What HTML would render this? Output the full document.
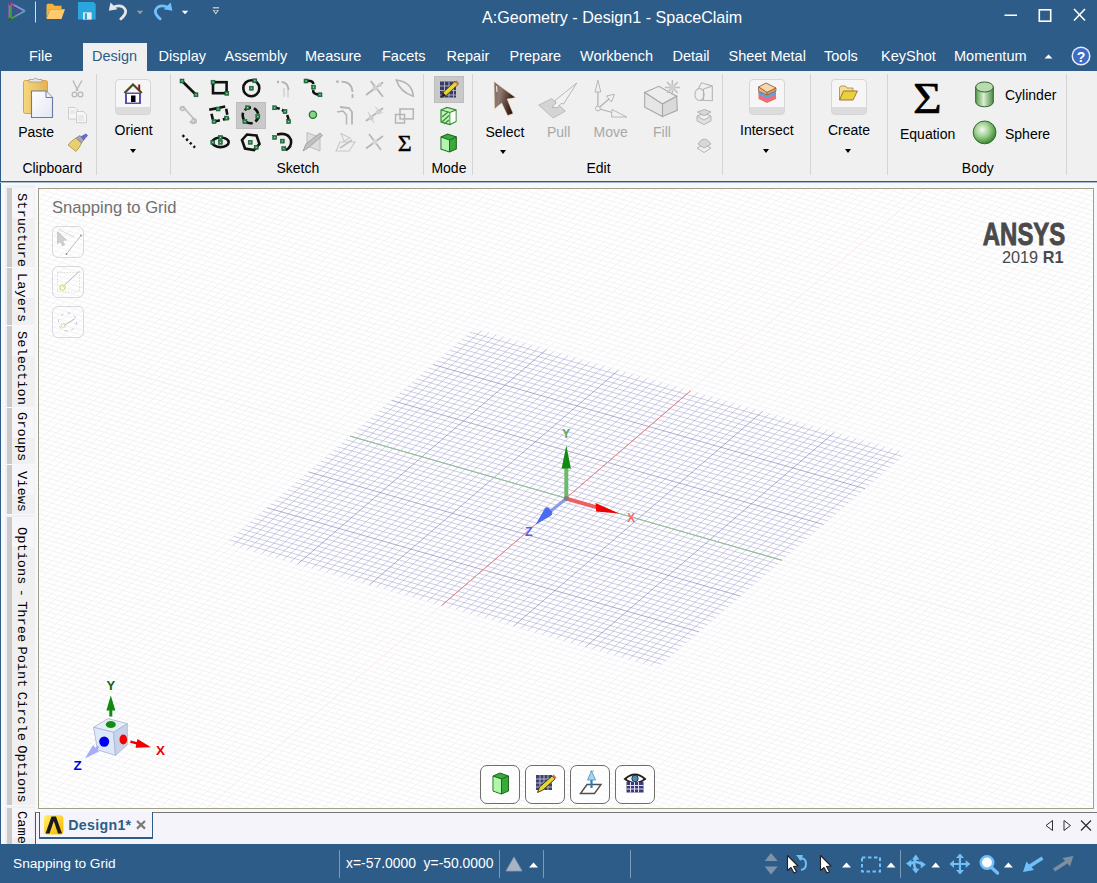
<!DOCTYPE html>
<html><head><meta charset="utf-8">
<style>
*{margin:0;padding:0;box-sizing:border-box}
html,body{width:1097px;height:883px;overflow:hidden;background:#fff;font-family:"Liberation Sans",sans-serif}
.a{position:absolute}
.t{position:absolute;white-space:nowrap;line-height:1}
#title{left:0;top:0;width:1097px;height:71px;background:#2D5C88}
.tab{position:absolute;top:48.7px;font-size:14.5px;color:#fff;white-space:nowrap;line-height:1}
#ribbon{left:0;top:71px;width:1097px;height:111px;background:#F0F0F0;border-left:1px solid #2D5C88}
.rl{position:absolute;font-size:14px;color:#000;white-space:nowrap;line-height:1}
.sep{position:absolute;top:74px;width:1px;height:101px;background:#D4D4D4}
.gl{position:absolute;top:161px;font-size:14px;color:#000;white-space:nowrap;line-height:1}
.dd{position:absolute;width:0;height:0;border-left:3.5px solid transparent;border-right:3.5px solid transparent;border-top:4px solid #000}
.side{position:absolute;left:5px;width:30px}
.vt{position:absolute;font-family:"Liberation Mono",monospace;font-size:13.7px;color:#000;white-space:nowrap;line-height:1;transform-origin:0 0;transform:rotate(90deg);word-spacing:-4.0px}
.bar{position:absolute;left:7px;width:5px;background:#C9C9C9}
#status{left:0;top:844px;width:1097px;height:39px;background:#2D5C88}
.ssep{position:absolute;top:850px;width:1px;height:28px;background:#7F9AB8}
.vbtn{position:absolute;top:765px;width:40px;height:39px;border:1px solid #6E6E6E;border-radius:7px;background:rgba(255,255,255,0.6)}
.snap{position:absolute;left:52px;width:32px;height:32px;border:1px solid #DADADA;border-radius:6px}
</style></head><body>

<!-- title bar + tab row -->
<div id="title" class="a"></div>
<div class="t" style="left:482px;top:9px;font-size:16.1px;color:#fff">A:Geometry - Design1 - SpaceClaim</div>


<svg class="a" style="left:0;top:0" width="240" height="26" viewBox="0 0 240 26">
 <!-- app logo -->
 <path d="M9.5 3 L9.5 19" stroke="#B060B0" stroke-width="2"/>
 <path d="M11 4 L11 18" stroke="#40A040" stroke-width="1.6"/>
 <path d="M10 3 L25 11" stroke="#C050A0" stroke-width="1.6"/>
 <path d="M14 5 L25 11" stroke="#60A0F0" stroke-width="1.6"/>
 <path d="M10 19 L25 11" stroke="#40B040" stroke-width="1.6"/>
 <path d="M15 16 L25 11" stroke="#6090E0" stroke-width="1.4"/>
 <path d="M12 6 L21 11 L12 17" stroke="#7A3060" stroke-width="1" fill="none" opacity="0.8"/>
 <circle cx="10" cy="19" r="1.5" fill="#0A7A0A"/>
 <circle cx="10" cy="4" r="1.3" fill="#A0208A"/>
 <!-- separator -->
 <rect x="35" y="1.5" width="1" height="21" fill="#D8DDE6"/>
 <!-- folder -->
 <path d="M46.5 18.5 L46.5 5.5 Q46.5 3.8 48 3.8 L52.5 3.8 L54.5 5.8 L61.5 5.8 L61.5 9 L50 9 Z" fill="#F4B43C"/>
 <path d="M46.5 19 L50 9.3 L65 9.3 L61.5 19 Z" fill="#FFC96E"/>
 <!-- save -->
 <path d="M78 2 L93.5 2 L95.7 4.2 L95.7 19.6 L78 19.6 Z" fill="#2AA6DF"/>
 <rect x="83" y="12.3" width="8.6" height="7.3" fill="#E8EAEC"/>
 <rect x="84.8" y="13.3" width="2.2" height="6.3" fill="#2AA6DF"/>
 <!-- undo -->
 <path d="M113 7.5 Q118.5 4.5 123 7 Q127 10 125 14 Q123.5 16.8 120.8 18.8" stroke="#E6E6E6" stroke-width="2.8" fill="none" stroke-linecap="round"/>
 <path d="M108.8 10.8 L110.5 2.5 L117.5 9.3 Z" fill="#E6E6E6"/>
 <path d="M136.7 10.8 L143.2 10.8 L140 14.2 Z" fill="#A59B8C"/>
 <!-- redo -->
 <path d="M168 7.5 Q162.5 4.5 158 7 Q154 10 156 14 Q157.5 16.8 160.2 18.8" stroke="#6EC0FF" stroke-width="2.8" fill="none" stroke-linecap="round"/>
 <path d="M172.4 10.8 L170.7 2.5 L163.7 9.3 Z" fill="#6EC0FF"/>
 <path d="M181.8 10.8 L188.3 10.8 L185 14.2 Z" fill="#fff"/>
 <!-- customize -->
 <rect x="212.8" y="7.2" width="6.2" height="1.2" fill="#D8D8D8"/>
 <path d="M212.6 10 L219 10 L215.8 14.5 Z" fill="#D8D8D8"/>
 <path d="M214 10.6 L217.6 10.6 L215.8 12.8 Z" fill="#2D5C88"/>
</svg>
<!-- window buttons -->
<svg class="a" style="left:995px;top:0" width="102" height="30" viewBox="995 0 102 30">
 <rect x="1004.5" y="14.5" width="12.5" height="1.5" fill="#fff"/>
 <rect x="1039.3" y="9.8" width="11.4" height="11.4" fill="none" stroke="#fff" stroke-width="1.6"/>
 <path d="M1074 9 L1085 20.5 M1085 9 L1074 20.5" stroke="#fff" stroke-width="1.6"/>
</svg>
<!-- collapse + help -->
<svg class="a" style="left:1040px;top:44px" width="57" height="26" viewBox="1040 44 57 26">
 <path d="M1044.5 58.5 L1048.5 54.5 L1052.5 58.5 Z" fill="#fff"/>
 <circle cx="1081" cy="56" r="9.5" fill="#E8EEF8"/>
 <circle cx="1081" cy="56" r="8" fill="#3C6CC8"/>
 <text x="1081" y="61.5" font-family="Liberation Sans" font-weight="bold" font-size="14" fill="#fff" text-anchor="middle">?</text>
</svg>

<!-- tabs -->
<div class="a" style="left:83px;top:43px;width:64px;height:28px;background:#F0F0F0"></div>
<div class="tab" style="left:29px">File</div>
<div class="tab" style="left:92px;color:#2D5C88">Design</div>
<div class="tab" style="left:158.5px">Display</div>
<div class="tab" style="left:224.5px">Assembly</div>
<div class="tab" style="left:305px">Measure</div>
<div class="tab" style="left:382px">Facets</div>
<div class="tab" style="left:446.5px">Repair</div>
<div class="tab" style="left:509.5px">Prepare</div>
<div class="tab" style="left:580px">Workbench</div>
<div class="tab" style="left:672.5px">Detail</div>
<div class="tab" style="left:728.5px">Sheet Metal</div>
<div class="tab" style="left:824px">Tools</div>
<div class="tab" style="left:881px">KeyShot</div>
<div class="tab" style="left:954px">Momentum</div>

<!-- ribbon -->
<div id="ribbon" class="a"></div>
<div class="a" style="left:0;top:181px;width:1097px;height:1px;background:#2D5C88"></div><div class="a" style="left:0;top:182px;width:1097px;height:1px;background:#A8BCD0"></div>


<!-- ribbon content -->
<div class="sep" style="left:96px"></div>
<div class="sep" style="left:170px"></div>
<div class="sep" style="left:423px"></div>
<div class="sep" style="left:472px"></div>
<div class="sep" style="left:722px"></div>
<div class="sep" style="left:810px"></div>
<div class="sep" style="left:887px"></div>
<div class="sep" style="left:1066px"></div>

<div class="rl" style="left:18.2px;top:124.5px">Paste</div>
<div class="gl" style="left:22.4px">Clipboard</div>
<div class="a" style="left:115px;top:79px;width:36px;height:36px;border:1px solid #D6D6D6;border-radius:4px;background:linear-gradient(#F6F6F6 0,#F6F6F6 78%,#DCDCDC 78%)"></div>
<div class="rl" style="left:114.6px;top:122.7px">Orient</div>
<div class="dd" style="left:129.7px;top:148.5px"></div>
<div class="gl" style="left:276.5px">Sketch</div>
<div class="gl" style="left:431.4px">Mode</div>
<div class="rl" style="left:485.5px;top:124.8px">Select</div>
<div class="dd" style="left:500.4px;top:149.5px"></div>
<div class="rl" style="left:547px;top:124.8px;color:#A8A8A8">Pull</div>
<div class="rl" style="left:593.5px;top:124.8px;color:#A8A8A8">Move</div>
<div class="rl" style="left:653px;top:124.8px;color:#A8A8A8">Fill</div>
<div class="gl" style="left:586.4px">Edit</div>
<div class="a" style="left:749px;top:79px;width:36px;height:36px;border:1px solid #D6D6D6;border-radius:4px;background:linear-gradient(#F6F6F6 0,#F6F6F6 78%,#DCDCDC 78%)"></div>
<div class="rl" style="left:740px;top:122.7px">Intersect</div>
<div class="dd" style="left:763.3px;top:148.5px"></div>
<div class="a" style="left:831px;top:79px;width:36px;height:36px;border:1px solid #D6D6D6;border-radius:4px;background:linear-gradient(#F6F6F6 0,#F6F6F6 78%,#DCDCDC 78%)"></div>
<div class="rl" style="left:828px;top:122.7px">Create</div>
<div class="dd" style="left:845.3px;top:148.5px"></div>
<div class="rl" style="left:900px;top:126.7px">Equation</div>
<div class="rl" style="left:1005px;top:88px">Cylinder</div>
<div class="rl" style="left:1005px;top:126.5px">Sphere</div>
<div class="gl" style="left:961.8px">Body</div>
<div class="a" style="left:236px;top:102px;width:30px;height:27px;background:#C9C9C9;border:1px solid #BDBDBD"></div>
<div class="a" style="left:434px;top:76px;width:30px;height:27px;background:#C9C9C9;border:1px solid #BDBDBD"></div>

<svg class="a" style="left:0;top:71px" width="1097" height="111" viewBox="0 71 1097 111">
<defs>
 <linearGradient id="clipg" x1="0" y1="0" x2="1" y2="0"><stop offset="0" stop-color="#F7D77E"/><stop offset="1" stop-color="#E5B24E"/></linearGradient>
 <linearGradient id="pageg" x1="0" y1="0" x2="1" y2="1"><stop offset="0" stop-color="#FFFFFF"/><stop offset="1" stop-color="#E4E6F2"/></linearGradient>
 <linearGradient id="selg" x1="0" y1="0" x2="1" y2="0.3"><stop offset="0" stop-color="#7A6A60"/><stop offset="0.35" stop-color="#907A70"/><stop offset="1" stop-color="#2A1208"/></linearGradient>
 <radialGradient id="sphg" cx="0.4" cy="0.38" r="0.62"><stop offset="0" stop-color="#F4FBF2"/><stop offset="0.5" stop-color="#9FD08F"/><stop offset="1" stop-color="#3F8A37"/></radialGradient>
 <linearGradient id="cylg" x1="0" y1="0" x2="1" y2="0"><stop offset="0" stop-color="#5A9A4E"/><stop offset="0.45" stop-color="#D8F0D0"/><stop offset="1" stop-color="#4E8A44"/></linearGradient>
</defs>
<rect x="23.5" y="80.5" width="24" height="33" rx="2" fill="url(#clipg)" stroke="#D9A048" stroke-width="1"/>
<path d="M29 82 L29 79.5 L33 79.5 Q35.5 76.5 38 79.5 L42 79.5 L42 82 Z" fill="#E6E6E6" stroke="#9A9A9A" stroke-width="0.8"/>
<path d="M31.5 91 L46 91 L52.5 97.5 L52.5 117.5 L31.5 117.5 Z" fill="url(#pageg)" stroke="#6A7AA8" stroke-width="1.1"/>
<path d="M46 91 L46 97.5 L52.5 97.5" fill="#EEF" stroke="#6A7AA8" stroke-width="1"/>
<!-- cut -->
<path d="M73 80.5 L78 91 M82 80.5 L76 91" stroke="#B8B8B8" stroke-width="1.4"/>
<circle cx="74.5" cy="94.5" r="2.4" fill="none" stroke="#B8B8B8" stroke-width="1.3"/>
<circle cx="80.5" cy="94.5" r="2.4" fill="none" stroke="#B8B8B8" stroke-width="1.3"/>
<!-- copy -->
<path d="M68.5 107.5 L75 107.5 L77.5 110 L77.5 119 L68.5 119 Z" fill="#F6F6F6" stroke="#C8C8C8" stroke-width="0.9"/>
<path d="M76.5 111.5 L83.5 111.5 L86.5 114.5 L86.5 122.7 L76.5 122.7 Z" fill="#F6F6F6" stroke="#C8C8C8" stroke-width="0.9"/>
<path d="M70 111 h5 M70 113 h5 M78 116 h6 M78 118 h6 M78 120 h6" stroke="#D0D0D0" stroke-width="0.7"/>
<!-- brush -->
<path d="M68 145 Q72 140 76 138 L81.5 143 Q79.5 148 76 151.5 Z" fill="#E8D070" stroke="#A89040" stroke-width="0.8"/>
<path d="M76 138 L80 135.5 L84 139.5 L81.5 143 Z" fill="#A8A8B0" stroke="#707078" stroke-width="0.6"/>
<path d="M80.5 136.5 L86 133.5 L88 135.5 L83.5 140.5 Z" fill="#6A68C8"/>
<!-- Orient house -->
<path d="M125 104 L125 92.5 L141 92.5 L141 104 Z" fill="#5A50A8"/>
<path d="M127 102.5 L127 94 L139 94 L139 102.5 Z" fill="#fff"/>
<rect x="131" y="95.5" width="4.5" height="6.5" fill="#000"/>
<path d="M124.5 93 L133 84.5 L141.8 93" fill="none" stroke="#4A4A1A" stroke-width="2.2"/>
<rect x="138.2" y="84.5" width="2" height="5.5" fill="#8A1A1A"/>
<path d="M182 81 L196 94.8" stroke="#111" stroke-width="2.6"/><rect x="180" y="79" width="4" height="4" fill="#227A44" stroke="#0E4E26" stroke-width="0.5"/><rect x="181.4" y="80.4" width="1.2" height="1.2" fill="#B8E0C4"/><rect x="194" y="92.8" width="4" height="4" fill="#227A44" stroke="#0E4E26" stroke-width="0.5"/><rect x="195.4" y="94.2" width="1.2" height="1.2" fill="#B8E0C4"/><rect x="213" y="82.2" width="13.6" height="11" fill="none" stroke="#111" stroke-width="2.6"/><rect x="211" y="80.2" width="4" height="4" fill="#227A44" stroke="#0E4E26" stroke-width="0.5"/><rect x="212.4" y="81.60000000000001" width="1.2" height="1.2" fill="#B8E0C4"/><rect x="224.8" y="91.3" width="4" height="4" fill="#227A44" stroke="#0E4E26" stroke-width="0.5"/><rect x="226.20000000000002" y="92.7" width="1.2" height="1.2" fill="#B8E0C4"/><circle cx="251.3" cy="88.2" r="8" fill="none" stroke="#111" stroke-width="2.6"/><rect x="249.3" y="86.2" width="4" height="4" fill="#227A44" stroke="#0E4E26" stroke-width="0.5"/><rect x="250.70000000000002" y="87.60000000000001" width="1.2" height="1.2" fill="#B8E0C4"/><rect x="252.8" y="78.8" width="4" height="4" fill="#227A44" stroke="#0E4E26" stroke-width="0.5"/><rect x="254.20000000000002" y="80.2" width="1.2" height="1.2" fill="#B8E0C4"/><path d="M277 82 L279 82" stroke="#B4B4B4" stroke-width="2.5"/><path d="M281.5 82 Q288 82.5 288.5 90" fill="none" stroke="#B4B4B4" stroke-width="2"/><path d="M284 88 L284 97 M288 90 L288 97.5" stroke="#C8C8C8" stroke-width="1.2"/><path d="M306 81 Q313 80 313.5 84 M313.5 90 Q312 94 320 94.8" fill="none" stroke="#111" stroke-width="2.6"/><rect x="304" y="79" width="4" height="4" fill="#227A44" stroke="#0E4E26" stroke-width="0.5"/><rect x="305.4" y="80.4" width="1.2" height="1.2" fill="#B8E0C4"/><rect x="311.5" y="85.1" width="4" height="4" fill="#227A44" stroke="#0E4E26" stroke-width="0.5"/><rect x="312.9" y="86.5" width="1.2" height="1.2" fill="#B8E0C4"/><rect x="318" y="92.8" width="4" height="4" fill="#227A44" stroke="#0E4E26" stroke-width="0.5"/><rect x="319.4" y="94.2" width="1.2" height="1.2" fill="#B8E0C4"/><path d="M336 81.6 L339 81.6" stroke="#B4B4B4" stroke-width="2"/><path d="M341.5 81.6 Q352 82 352.5 92" fill="none" stroke="#B4B4B4" stroke-width="1.8"/><path d="M352.5 94 L352.5 98" stroke="#B4B4B4" stroke-width="1.8"/><path d="M366 95 L383 82.2 M370.7 81 L383 96.8" stroke="#B4B4B4" stroke-width="1.8"/><circle cx="375" cy="88" r="2.5" fill="#D0D0D0"/><circle cx="380" cy="85" r="2" fill="#D0D0D0"/><path d="M396.3 80 Q412 82 413.3 96.2 Q400 92 396.3 80 Z" fill="none" stroke="#B4B4B4" stroke-width="1.6"/><path d="M180 109 Q181 106 184 108 L193 118 Q196 121 194 123 Q191 124 190 121" fill="none" stroke="#BDBDBD" stroke-width="1.8"/><circle cx="182.5" cy="108.5" r="2" fill="none" stroke="#BDBDBD" stroke-width="1.5"/><circle cx="194" cy="121" r="2.2" fill="none" stroke="#BDBDBD" stroke-width="1.5"/><path d="M210.5 109.6 L225.7 106.4 L228 118.3 L213.4 121.8 Z" fill="none" stroke="#111" stroke-width="2.6" stroke-dasharray="6 3"/><rect x="216.1" y="107" width="4" height="4" fill="#227A44" stroke="#0E4E26" stroke-width="0.5"/><rect x="217.5" y="108.4" width="1.2" height="1.2" fill="#B8E0C4"/><rect x="224.6" y="116.1" width="4" height="4" fill="#227A44" stroke="#0E4E26" stroke-width="0.5"/><rect x="226.0" y="117.5" width="1.2" height="1.2" fill="#B8E0C4"/><rect x="212" y="119.6" width="4" height="4" fill="#227A44" stroke="#0E4E26" stroke-width="0.5"/><rect x="213.4" y="121.0" width="1.2" height="1.2" fill="#B8E0C4"/><circle cx="250.5" cy="115.4" r="7.8" fill="none" stroke="#111" stroke-width="2.6" stroke-dasharray="7 3"/><rect x="245.6" y="105.8" width="4" height="4" fill="#227A44" stroke="#0E4E26" stroke-width="0.5"/><rect x="247.0" y="107.2" width="1.2" height="1.2" fill="#B8E0C4"/><rect x="255.8" y="114.6" width="4" height="4" fill="#227A44" stroke="#0E4E26" stroke-width="0.5"/><rect x="257.2" y="116.0" width="1.2" height="1.2" fill="#B8E0C4"/><rect x="242.9" y="119.6" width="4" height="4" fill="#227A44" stroke="#0E4E26" stroke-width="0.5"/><rect x="244.3" y="121.0" width="1.2" height="1.2" fill="#B8E0C4"/><path d="M274.7 107.8 Q288 109 288.7 121.6" fill="none" stroke="#111" stroke-width="2.6" stroke-dasharray="5 2.5"/><rect x="272.7" y="105.8" width="4" height="4" fill="#227A44" stroke="#0E4E26" stroke-width="0.5"/><rect x="274.09999999999997" y="107.2" width="1.2" height="1.2" fill="#B8E0C4"/><rect x="283" y="109.6" width="4" height="4" fill="#227A44" stroke="#0E4E26" stroke-width="0.5"/><rect x="284.4" y="111.0" width="1.2" height="1.2" fill="#B8E0C4"/><rect x="286.7" y="119.6" width="4" height="4" fill="#227A44" stroke="#0E4E26" stroke-width="0.5"/><rect x="288.09999999999997" y="121.0" width="1.2" height="1.2" fill="#B8E0C4"/><circle cx="312.9" cy="114.8" r="3.6" fill="#8FD08A" stroke="#1E7A2E" stroke-width="1.3"/><path d="M337 112 L343 111 L346.5 115 L346.5 124.5" fill="none" stroke="#B4B4B4" stroke-width="1.5"/><path d="M340 107 L349 108 L352 112 L352 124.5" fill="none" stroke="#B4B4B4" stroke-width="1.8"/><path d="M366 121 L383 108" stroke="#B4B4B4" stroke-width="1.6"/><circle cx="371" cy="118" r="2.5" fill="#D0D0D0"/><circle cx="378.5" cy="112" r="2.5" fill="#D0D0D0"/><path d="M368 112 L374 123 M375 107 L383 113" stroke="#C8C8C8" stroke-width="1"/><rect x="395.5" y="114.5" width="9" height="8.5" fill="none" stroke="#B4B4B4" stroke-width="1.5"/><rect x="400" y="109" width="13.3" height="9.9" fill="none" stroke="#B4B4B4" stroke-width="1.5"/><path d="M182.5 135.2 L195 147.6" stroke="#111" stroke-width="2.4" stroke-dasharray="2.4 2.8" stroke-linecap="butt"/><ellipse cx="220.5" cy="142.3" rx="8.2" ry="4.8" fill="none" stroke="#111" stroke-width="2.6"/><rect x="218.4" y="135.5" width="4" height="4" fill="#227A44" stroke="#0E4E26" stroke-width="0.5"/><rect x="219.8" y="136.9" width="1.2" height="1.2" fill="#B8E0C4"/><rect x="210.8" y="140.3" width="4" height="4" fill="#227A44" stroke="#0E4E26" stroke-width="0.5"/><rect x="212.20000000000002" y="141.70000000000002" width="1.2" height="1.2" fill="#B8E0C4"/><rect x="218.4" y="140.3" width="4" height="4" fill="#227A44" stroke="#0E4E26" stroke-width="0.5"/><rect x="219.8" y="141.70000000000002" width="1.2" height="1.2" fill="#B8E0C4"/><path d="M247 134.5 L256.5 135.5 L259.5 144 L254 150 L245 148.5 L242 140 Z" fill="none" stroke="#111" stroke-width="2.6"/><rect x="248.2" y="140.3" width="4" height="4" fill="#227A44" stroke="#0E4E26" stroke-width="0.5"/><rect x="249.6" y="141.70000000000002" width="1.2" height="1.2" fill="#B8E0C4"/><rect x="254.2" y="145.3" width="4" height="4" fill="#227A44" stroke="#0E4E26" stroke-width="0.5"/><rect x="255.6" y="146.70000000000002" width="1.2" height="1.2" fill="#B8E0C4"/><path d="M277 134.5 Q288 132 291 140 Q292 147 286 150" fill="none" stroke="#111" stroke-width="2.6"/><rect x="272.7" y="135.4" width="4" height="4" fill="#227A44" stroke="#0E4E26" stroke-width="0.5"/><rect x="274.09999999999997" y="136.8" width="1.2" height="1.2" fill="#B8E0C4"/><rect x="280.3" y="139.1" width="4" height="4" fill="#227A44" stroke="#0E4E26" stroke-width="0.5"/><rect x="281.7" y="140.5" width="1.2" height="1.2" fill="#B8E0C4"/><rect x="281.8" y="146.7" width="4" height="4" fill="#227A44" stroke="#0E4E26" stroke-width="0.5"/><rect x="283.2" y="148.1" width="1.2" height="1.2" fill="#B8E0C4"/><path d="M307 132.5 L320 137.5 L320 151 L307 146 Z" fill="#DDDDDD" stroke="#BDBDBD" stroke-width="1"/><path d="M303 151 L306 144 L320 133 L322.5 135.5 L308 148 Z" fill="#C0C0C0" stroke="#999" stroke-width="0.8"/><path d="M341 133.5 L350 138 L344 141 Z M336 151 L340 142 L355 142 L349 151 Z" fill="none" stroke="#C8C8C8" stroke-width="1.1"/><path d="M340 148 L352 140" stroke="#C0C0C0" stroke-width="1.6"/><path d="M366 148.5 L383 136 M369 134 L381 150" stroke="#B4B4B4" stroke-width="1.6"/><circle cx="375" cy="142" r="2.5" fill="#D6D6D6"/><text x="404.8" y="150.5" font-family="Liberation Serif" font-size="24" stroke="#000" stroke-width="0.4" text-anchor="middle" fill="#000">&#931;</text>
<rect x="440" y="81.5" width="16" height="16" fill="#3A3A6A"/>
<path d="M440 86 h16 M440 90.5 h16 M440 95 h16 M444.5 81.5 v16 M449 81.5 v16 M453.5 81.5 v16" stroke="#B8B8C8" stroke-width="0.9"/>
<path d="M441 97.5 L443 92.5 L455 81.5 L458 84.5 L446 95.5 Z" fill="#E6D830" stroke="#403820" stroke-width="0.8"/>
<path d="M455 81.5 L458 84.5 L459 83 L456.5 80.5 Z" fill="#E06060"/>
<path d="M441 97.5 L443 92.5 L446 95.5 Z" fill="#222"/>
<path d="M441 110 L447 107.5 L456 110 L456 121.5 L450 124.5 L441 122 Z" fill="#C8F0C0" stroke="#2E8A2E" stroke-width="1.2"/>
<path d="M441 110 L450 112.5 L456 110 M450 112.5 L450 124.5" fill="none" stroke="#2E8A2E" stroke-width="1.1"/>
<path d="M442 117 L448 112 M442 122 L449 115.5 M444 124 L449 120" stroke="#3A9A3A" stroke-width="1.6"/>
<path d="M450.5 113 L455.5 111 L455.5 121 L450.5 123.5 Z" fill="#fff"/>
<path d="M441 137 L447.5 134 L456.3 137 L456.3 149 L449.5 152 L441 149 Z" fill="#3EA83E" stroke="#1E6A1E" stroke-width="1.1"/>
<path d="M441.5 137.5 L449.5 140 L449.5 151.5 L441.5 148.8 Z" fill="#B2F5AE"/>
<path d="M441 137 L449.5 140 L456.3 137 M449.5 140 V152" fill="none" stroke="#1E6A1E" stroke-width="1"/>

<path d="M494 81.5 L515.6 97.6 L507.1 99.1 L513.1 113.6 L507.6 115.6 L501.6 103.1 L494.5 109.1 Z" fill="url(#selg)" stroke="#F0D8C0" stroke-width="0.6"/>
<path d="M496.5 86 L497 92" stroke="#fff" stroke-width="1.2" opacity="0.8"/>
<path d="M538.7 105.1 L551.7 98.6 L565.3 111.1 L553.2 118.1 Z" fill="#D4D4D4" stroke="#B8B8B8" stroke-width="0.9"/>
<path d="M552 107 L556 103 L555 100.5 L576.8 83 L563.5 104 L561 103.5 L557 108 Z" fill="#F2F2F2" stroke="#B0B0B0" stroke-width="0.9"/>
<path d="M597.9 108.5 V90" stroke="#B0B0B0" stroke-width="1.2"/><path d="M595 92 L597.9 80.2 L600.8 92 Z" fill="#F0F0F0" stroke="#B0B0B0" stroke-width="0.9"/>
<path d="M598 108.5 L609 99" stroke="#B0B0B0" stroke-width="1.2"/><path d="M606.5 96 L614.5 94.3 L611.5 102 Z" fill="#F0F0F0" stroke="#B0B0B0" stroke-width="0.9"/>
<path d="M598 108.5 L614 113" stroke="#B0B0B0" stroke-width="1.2"/><path d="M612 109.5 L626.8 117 L611.5 117 Z" fill="#F0F0F0" stroke="#B0B0B0" stroke-width="0.9"/>
<circle cx="597.9" cy="108.5" r="2.4" fill="#F0F0F0" stroke="#B0B0B0" stroke-width="0.9"/>
<path d="M644.7 92.5 L658.8 86.3 L676.7 96.2 L662.5 104.1 Z" fill="#EDEDED" stroke="#A8A8A8" stroke-width="1.1"/>
<path d="M644.7 92.5 L662.5 104.1 L662.5 116.5 L644.7 107.2 Z" fill="#E6E6E6" stroke="#A8A8A8" stroke-width="1.1"/>
<path d="M662.5 104.1 L676.7 96.2 L677.3 110.3 L662.5 116.5 Z" fill="#DADADA" stroke="#A8A8A8" stroke-width="1.1"/>
<path d="M672.4 80 V95 M664.9 87.5 H679.9 M667 82 L677.8 93 M677.8 82 L667 93" stroke="#BDBDBD" stroke-width="1.5"/>
<circle cx="672.4" cy="87.5" r="3" fill="#D0D0D0"/>
<ellipse cx="699.5" cy="94.5" rx="4.6" ry="6" fill="none" stroke="#B4B4B4" stroke-width="1.1"/>
<path d="M698.5 88.5 L701.5 82.8 L712.3 86 L712.3 100.8 L700 100.3 M703.5 89 L712.3 86 M703.5 89 L703.5 100.5" fill="none" stroke="#B4B4B4" stroke-width="1.1"/>
<path d="M697 116 L704 113 L711 116 L704 120 Z M697 116 V121 L704 124.5 L711 121 V116" fill="#E0E0E0" stroke="#B4B4B4" stroke-width="1"/>
<path d="M697.5 112 L704.5 109.5 L711 112 L704 115.5 Z" fill="#D8D8D8" stroke="#B4B4B4" stroke-width="1"/>
<path d="M697 148 L704 144.5 L711 148 L704 152.5 Z" fill="none" stroke="#B4B4B4" stroke-width="1"/>
<path d="M698 144 Q704 134 711 144 L704 148 Z" fill="#D8D8D8" stroke="#B4B4B4" stroke-width="1"/>

<path d="M758.5 87 L766 83 L776 88 L776 99 L767 103 L758.5 99 Z" fill="#E87078"/>
<path d="M758.5 91.5 L767 95.5 L776 91.5 L776 94 L767 98 L758.5 94 Z" fill="#50A8E8"/>
<path d="M758.5 87 L766 83 L776 88 L767 92.5 Z" fill="#F6D8B0" stroke="#8A5A30" stroke-width="0.8"/>
<path d="M758.5 87 L767 92.5 L767 95 L758.5 91 Z" fill="#E8B888" stroke="#8A5A30" stroke-width="0.7"/>
<path d="M767 92.5 L776 88 L776 91 L767 95 Z" fill="#D8A070" stroke="#8A5A30" stroke-width="0.7"/>
<path d="M839.5 99.5 V88 Q839.5 86 841.5 86 L845.5 86 L847 88 L853 88 L853 91 Z" fill="#F0E090" stroke="#B08040" stroke-width="0.8"/>
<path d="M839.5 100 L843.5 91 L857.4 91 L853 100 Z" fill="#E8D040" stroke="#A06820" stroke-width="0.9"/>
<text x="927.3" y="113" font-family="Liberation Serif" font-size="44" text-anchor="middle" fill="#000" stroke="#000" stroke-width="0.5" transform="translate(927.3 0) scale(1.12 1) translate(-927.3 0)">&#931;</text>
<path d="M975.7 87 V102 A8.8 4.8 0 0 0 993.3 102 V87" fill="url(#cylg)" stroke="#2F5F2F" stroke-width="1"/>
<ellipse cx="984.5" cy="87" rx="8.8" ry="5" fill="#B8DCB0" stroke="#2F5F2F" stroke-width="1"/>
<circle cx="984.6" cy="132.4" r="11.4" fill="url(#sphg)" stroke="#2F6A2F" stroke-width="1"/>
</svg>
<!-- content strip -->
<div class="a" style="left:0;top:183px;width:1097px;height:661px;background:#F7F8FC;border-left:1px solid #2D5C88"></div>

<!-- side panel -->
<div class="a" style="left:5px;top:185px;width:30px;height:659px;background:#F0F0F0"></div>


<!-- side tabs -->
<div class="a" style="left:12px;top:188px;width:22px;height:30px;background:#F6F6FA"></div><div class="a" style="left:12px;top:268px;width:22px;height:30px;background:#F6F6FA"></div><div class="a" style="left:12px;top:326px;width:22px;height:30px;background:#F6F6FA"></div><div class="a" style="left:12px;top:408px;width:22px;height:30px;background:#F6F6FA"></div><div class="a" style="left:12px;top:465px;width:22px;height:30px;background:#F6F6FA"></div><div class="a" style="left:12px;top:517px;width:22px;height:30px;background:#F6F6FA"></div><div class="a" style="left:12px;top:808px;width:22px;height:30px;background:#F6F6FA"></div><div class="a" style="left:5px;top:267px;width:30px;height:1px;background:#F8F8FC"></div><div class="a" style="left:5px;top:325px;width:30px;height:1px;background:#F8F8FC"></div><div class="a" style="left:5px;top:407px;width:30px;height:1px;background:#F8F8FC"></div><div class="a" style="left:5px;top:464px;width:30px;height:1px;background:#F8F8FC"></div><div class="a" style="left:5px;top:514px;width:30px;height:1px;background:#F8F8FC"></div><div class="a" style="left:5px;top:805px;width:30px;height:1px;background:#F8F8FC"></div>
<div class="bar" style="top:188px;height:79px"></div>
<div class="bar" style="top:268px;height:57px"></div>
<div class="bar" style="top:326px;height:81px"></div>
<div class="bar" style="top:408px;height:56px"></div>
<div class="bar" style="top:465px;height:49px"></div>
<div class="bar" style="top:517px;height:288px"></div>
<div class="bar" style="top:808px;height:36px"></div>
<div class="vt" style="left:28px;top:192.5px">Structure</div>
<div class="vt" style="left:28px;top:273px">Layers</div>
<div class="vt" style="left:28px;top:330.5px">Selection</div>
<div class="vt" style="left:28px;top:411.5px">Groups</div>
<div class="vt" style="left:28px;top:471px">Views</div>
<div class="vt" style="left:28px;top:526.5px">Options - Three Point Circle Options</div>
<div class="vt" style="left:28px;top:810.5px">Camera</div>

<!-- viewport -->
<div class="a" style="left:38px;top:188px;width:1056px;height:621px;background:#fff;border:1px solid #A29E88;overflow:hidden" id="vp"><svg class="a" style="left:0;top:0" width="1056" height="620" viewBox="0 0 1056 620">
<path d="M-82.60 -324.28L1933.40 255.32M-86.75 -320.70L1929.25 258.90M-90.90 -317.12L1925.10 262.48M-95.05 -313.54L1920.95 266.06M-99.20 -309.96L1916.80 269.64M445.60 -382.44L-716.40 619.96M-103.35 -306.38L1912.65 273.22M452.80 -380.37L-709.20 622.03M-107.50 -302.80L1908.50 276.80M460.00 -378.30L-702.00 624.10M-111.65 -299.22L1904.35 280.38M467.20 -376.23L-694.80 626.17M-115.80 -295.64L1900.20 283.96M474.40 -374.16L-687.60 628.24M-119.95 -292.06L1896.05 287.54M481.60 -372.09L-680.40 630.31M-124.10 -288.48L1891.90 291.12M488.80 -370.02L-673.20 632.38M-128.25 -284.90L1887.75 294.70M496.00 -367.95L-666.00 634.45M-132.40 -281.32L1883.60 298.28M503.20 -365.88L-658.80 636.52M-136.55 -277.74L1879.45 301.86M510.40 -363.81L-651.60 638.59M-140.70 -274.16L1875.30 305.44M517.60 -361.74L-644.40 640.66M-144.85 -270.58L1871.15 309.02M524.80 -359.67L-637.20 642.73M-149.00 -267.00L1867.00 312.60M532.00 -357.60L-630.00 644.80M-153.15 -263.42L1862.85 316.18M539.20 -355.53L-622.80 646.87M-157.30 -259.84L1858.70 319.76M546.40 -353.46L-615.60 648.94M-161.45 -256.26L1854.55 323.34M553.60 -351.39L-608.40 651.01M-165.60 -252.68L1850.40 326.92M560.80 -349.32L-601.20 653.08M-169.75 -249.10L1846.25 330.50M568.00 -347.25L-594.00 655.15M-173.90 -245.52L1842.10 334.08M575.20 -345.18L-586.80 657.22M-178.05 -241.94L1837.95 337.66M582.40 -343.11L-579.60 659.29M-182.20 -238.36L1833.80 341.24M589.60 -341.04L-572.40 661.36M-186.35 -234.78L1829.65 344.82M596.80 -338.97L-565.20 663.43M-190.50 -231.20L1825.50 348.40M604.00 -336.90L-558.00 665.50M-194.65 -227.62L1821.35 351.98M611.20 -334.83L-550.80 667.57M-198.80 -224.04L1817.20 355.56M618.40 -332.76L-543.60 669.64M-202.95 -220.46L1813.05 359.14M625.60 -330.69L-536.40 671.71M-207.10 -216.88L1808.90 362.72M632.80 -328.62L-529.20 673.78M-211.25 -213.30L1804.75 366.30M640.00 -326.55L-522.00 675.85M-215.40 -209.72L1800.60 369.88M647.20 -324.48L-514.80 677.92M-219.55 -206.14L1796.45 373.46M654.40 -322.41L-507.60 679.99M-223.70 -202.56L1792.30 377.04M661.60 -320.34L-500.40 682.06M-227.85 -198.98L1788.15 380.62M668.80 -318.27L-493.20 684.13M-232.00 -195.40L1784.00 384.20M676.00 -316.20L-486.00 686.20M-236.15 -191.82L1779.85 387.78M683.20 -314.13L-478.80 688.27M-240.30 -188.24L1775.70 391.36M690.40 -312.06L-471.60 690.34M-244.45 -184.66L1771.55 394.94M697.60 -309.99L-464.40 692.41M-248.60 -181.08L1767.40 398.52M704.80 -307.92L-457.20 694.48M-252.75 -177.50L1763.25 402.10M712.00 -305.85L-450.00 696.55M-256.90 -173.92L1759.10 405.68M719.20 -303.78L-442.80 698.62M-261.05 -170.34L1754.95 409.26M726.40 -301.71L-435.60 700.69M-265.20 -166.76L1750.80 412.84M733.60 -299.64L-428.40 702.76M-269.35 -163.18L1746.65 416.42M740.80 -297.57L-421.20 704.83M-273.50 -159.60L1742.50 420.00M748.00 -295.50L-414.00 706.90M-277.65 -156.02L1738.35 423.58M755.20 -293.43L-406.80 708.97M-281.80 -152.44L1734.20 427.16M762.40 -291.36L-399.60 711.04M-285.95 -148.86L1730.05 430.74M769.60 -289.29L-392.40 713.11M-290.10 -145.28L1725.90 434.32M776.80 -287.22L-385.20 715.18M-294.25 -141.70L1721.75 437.90M784.00 -285.15L-378.00 717.25M-298.40 -138.12L1717.60 441.48M791.20 -283.08L-370.80 719.32M-302.55 -134.54L1713.45 445.06M798.40 -281.01L-363.60 721.39M-306.70 -130.96L1709.30 448.64M805.60 -278.94L-356.40 723.46M-310.85 -127.38L1705.15 452.22M812.80 -276.87L-349.20 725.53M-315.00 -123.80L1701.00 455.80M820.00 -274.80L-342.00 727.60M-319.15 -120.22L1696.85 459.38M827.20 -272.73L-334.80 729.67M-323.30 -116.64L1692.70 462.96M834.40 -270.66L-327.60 731.74M-327.45 -113.06L1688.55 466.54M841.60 -268.59L-320.40 733.81M-331.60 -109.48L1684.40 470.12M848.80 -266.52L-313.20 735.88M-335.75 -105.90L1680.25 473.70M856.00 -264.45L-306.00 737.95M-339.90 -102.32L1676.10 477.28M863.20 -262.38L-298.80 740.02M-344.05 -98.74L1671.95 480.86M870.40 -260.31L-291.60 742.09M-348.20 -95.16L1667.80 484.44M877.60 -258.24L-284.40 744.16M-352.35 -91.58L1663.65 488.02M884.80 -256.17L-277.20 746.23M-356.50 -88.00L1659.50 491.60M892.00 -254.10L-270.00 748.30M-360.65 -84.42L1655.35 495.18M899.20 -252.03L-262.80 750.37M-364.80 -80.84L1651.20 498.76M906.40 -249.96L-255.60 752.44M-368.95 -77.26L1647.05 502.34M913.60 -247.89L-248.40 754.51M-373.10 -73.68L1642.90 505.92M920.80 -245.82L-241.20 756.58M-377.25 -70.10L1638.75 509.50M928.00 -243.75L-234.00 758.65M-381.40 -66.52L1634.60 513.08M935.20 -241.68L-226.80 760.72M-385.55 -62.94L1630.45 516.66M942.40 -239.61L-219.60 762.79M-389.70 -59.36L1626.30 520.24M949.60 -237.54L-212.40 764.86M-393.85 -55.78L1622.15 523.82M956.80 -235.47L-205.20 766.93M-398.00 -52.20L1618.00 527.40M964.00 -233.40L-198.00 769.00M-402.15 -48.62L1613.85 530.98M971.20 -231.33L-190.80 771.07M-406.30 -45.04L1609.70 534.56M978.40 -229.26L-183.60 773.14M-410.45 -41.46L1605.55 538.14M985.60 -227.19L-176.40 775.21M-414.60 -37.88L1601.40 541.72M992.80 -225.12L-169.20 777.28M-418.75 -34.30L1597.25 545.30M1000.00 -223.05L-162.00 779.35M-422.90 -30.72L1593.10 548.88M1007.20 -220.98L-154.80 781.42M-427.05 -27.14L1588.95 552.46M1014.40 -218.91L-147.60 783.49M-431.20 -23.56L1584.80 556.04M1021.60 -216.84L-140.40 785.56M-435.35 -19.98L1580.65 559.62M1028.80 -214.77L-133.20 787.63M-439.50 -16.40L1576.50 563.20M1036.00 -212.70L-126.00 789.70M-443.65 -12.82L1572.35 566.78M1043.20 -210.63L-118.80 791.77M-447.80 -9.24L1568.20 570.36M1050.40 -208.56L-111.60 793.84M-451.95 -5.66L1564.05 573.94M1057.60 -206.49L-104.40 795.91M-456.10 -2.08L1559.90 577.52M1064.80 -204.42L-97.20 797.98M-460.25 1.50L1555.75 581.10M1072.00 -202.35L-90.00 800.05M-464.40 5.08L1551.60 584.68M1079.20 -200.28L-82.80 802.12M-468.55 8.66L1547.45 588.26M1086.40 -198.21L-75.60 804.19M-472.70 12.24L1543.30 591.84M1093.60 -196.14L-68.40 806.26M-476.85 15.82L1539.15 595.42M1100.80 -194.07L-61.20 808.33M-481.00 19.40L1535.00 599.00M1108.00 -192.00L-54.00 810.40M-485.15 22.98L1530.85 602.58M1115.20 -189.93L-46.80 812.47M-489.30 26.56L1526.70 606.16M1122.40 -187.86L-39.60 814.54M-493.45 30.14L1522.55 609.74M1129.60 -185.79L-32.40 816.61M-497.60 33.72L1518.40 613.32M1136.80 -183.72L-25.20 818.68M-501.75 37.30L1514.25 616.90M1144.00 -181.65L-18.00 820.75M-505.90 40.88L1510.10 620.48M1151.20 -179.58L-10.80 822.82M-510.05 44.46L1505.95 624.06M1158.40 -177.51L-3.60 824.89M-514.20 48.04L1501.80 627.64M1165.60 -175.44L3.60 826.96M-518.35 51.62L1497.65 631.22M1172.80 -173.37L10.80 829.03M-522.50 55.20L1493.50 634.80M1180.00 -171.30L18.00 831.10M-526.65 58.78L1489.35 638.38M1187.20 -169.23L25.20 833.17M-530.80 62.36L1485.20 641.96M1194.40 -167.16L32.40 835.24M-534.95 65.94L1481.05 645.54M1201.60 -165.09L39.60 837.31M-539.10 69.52L1476.90 649.12M1208.80 -163.02L46.80 839.38M-543.25 73.10L1472.75 652.70M1216.00 -160.95L54.00 841.45M-547.40 76.68L1468.60 656.28M1223.20 -158.88L61.20 843.52M-551.55 80.26L1464.45 659.86M1230.40 -156.81L68.40 845.59M-555.70 83.84L1460.30 663.44M1237.60 -154.74L75.60 847.66M-559.85 87.42L1456.15 667.02M1244.80 -152.67L82.80 849.73M-564.00 91.00L1452.00 670.60M1252.00 -150.60L90.00 851.80M-568.15 94.58L1447.85 674.18M1259.20 -148.53L97.20 853.87M-572.30 98.16L1443.70 677.76M1266.40 -146.46L104.40 855.94M-576.45 101.74L1439.55 681.34M1273.60 -144.39L111.60 858.01M-580.60 105.32L1435.40 684.92M1280.80 -142.32L118.80 860.08M-584.75 108.90L1431.25 688.50M1288.00 -140.25L126.00 862.15M-588.90 112.48L1427.10 692.08M1295.20 -138.18L133.20 864.22M-593.05 116.06L1422.95 695.66M1302.40 -136.11L140.40 866.29M-597.20 119.64L1418.80 699.24M1309.60 -134.04L147.60 868.36M-601.35 123.22L1414.65 702.82M1316.80 -131.97L154.80 870.43M-605.50 126.80L1410.50 706.40M1324.00 -129.90L162.00 872.50M-609.65 130.38L1406.35 709.98M1331.20 -127.83L169.20 874.57M-613.80 133.96L1402.20 713.56M1338.40 -125.76L176.40 876.64M-617.95 137.54L1398.05 717.14M1345.60 -123.69L183.60 878.71M-622.10 141.12L1393.90 720.72M1352.80 -121.62L190.80 880.78M-626.25 144.70L1389.75 724.30M1360.00 -119.55L198.00 882.85M-630.40 148.28L1385.60 727.88M1367.20 -117.48L205.20 884.92M-634.55 151.86L1381.45 731.46M1374.40 -115.41L212.40 886.99M-638.70 155.44L1377.30 735.04M1381.60 -113.34L219.60 889.06M-642.85 159.02L1373.15 738.62M1388.80 -111.27L226.80 891.13M-647.00 162.60L1369.00 742.20M1396.00 -109.20L234.00 893.20M-651.15 166.18L1364.85 745.78M1403.20 -107.13L241.20 895.27M-655.30 169.76L1360.70 749.36M1410.40 -105.06L248.40 897.34M-659.45 173.34L1356.55 752.94M1417.60 -102.99L255.60 899.41M-663.60 176.92L1352.40 756.52M1424.80 -100.92L262.80 901.48M-667.75 180.50L1348.25 760.10M1432.00 -98.85L270.00 903.55M-671.90 184.08L1344.10 763.68M1439.20 -96.78L277.20 905.62M-676.05 187.66L1339.95 767.26M1446.40 -94.71L284.40 907.69M-680.20 191.24L1335.80 770.84M1453.60 -92.64L291.60 909.76M-684.35 194.82L1331.65 774.42M1460.80 -90.57L298.80 911.83M-688.50 198.40L1327.50 778.00M1468.00 -88.50L306.00 913.90M-692.65 201.98L1323.35 781.58M1475.20 -86.43L313.20 915.97M-696.80 205.56L1319.20 785.16M1482.40 -84.36L320.40 918.04M-700.95 209.14L1315.05 788.74M1489.60 -82.29L327.60 920.11M-705.10 212.72L1310.90 792.32M1496.80 -80.22L334.80 922.18M-709.25 216.30L1306.75 795.90M1504.00 -78.15L342.00 924.25M-713.40 219.88L1302.60 799.48M1511.20 -76.08L349.20 926.32M-717.55 223.46L1298.45 803.06M1518.40 -74.01L356.40 928.39M-721.70 227.04L1294.30 806.64M1525.60 -71.94L363.60 930.46M-725.85 230.62L1290.15 810.22M1532.80 -69.87L370.80 932.53M-730.00 234.20L1286.00 813.80M1540.00 -67.80L378.00 934.60M-734.15 237.78L1281.85 817.38M1547.20 -65.73L385.20 936.67M-738.30 241.36L1277.70 820.96M1554.40 -63.66L392.40 938.74M-742.45 244.94L1273.55 824.54M1561.60 -61.59L399.60 940.81M-746.60 248.52L1269.40 828.12M1568.80 -59.52L406.80 942.88M-750.75 252.10L1265.25 831.70M1576.00 -57.45L414.00 944.95M-754.90 255.68L1261.10 835.28M1583.20 -55.38L421.20 947.02M-759.05 259.26L1256.95 838.86M1590.40 -53.31L428.40 949.09M-763.20 262.84L1252.80 842.44M1597.60 -51.24L435.60 951.16M-767.35 266.42L1248.65 846.02M1604.80 -49.17L442.80 953.23M-771.50 270.00L1244.50 849.60M1612.00 -47.10L450.00 955.30M-775.65 273.58L1240.35 853.18M1619.20 -45.03L457.20 957.37M-779.80 277.16L1236.20 856.76M1626.40 -42.96L464.40 959.44M-783.95 280.74L1232.05 860.34M1633.60 -40.89L471.60 961.51M-788.10 284.32L1227.90 863.92M1640.80 -38.82L478.80 963.58M-792.25 287.90L1223.75 867.50M1648.00 -36.75L486.00 965.65M-796.40 291.48L1219.60 871.08M1655.20 -34.68L493.20 967.72M-800.55 295.06L1215.45 874.66M1662.40 -32.61L500.40 969.79M-804.70 298.64L1211.30 878.24M1669.60 -30.54L507.60 971.86M-808.85 302.22L1207.15 881.82M1676.80 -28.47L514.80 973.93M-813.00 305.80L1203.00 885.40M1684.00 -26.40L522.00 976.00M-817.15 309.38L1198.85 888.98M1691.20 -24.33L529.20 978.07M-821.30 312.96L1194.70 892.56M1698.40 -22.26L536.40 980.14M-825.45 316.54L1190.55 896.14M1705.60 -20.19L543.60 982.21M-829.60 320.12L1186.40 899.72M1712.80 -18.12L550.80 984.28M-833.75 323.70L1182.25 903.30M1720.00 -16.05L558.00 986.35M-837.90 327.28L1178.10 906.88M1727.20 -13.98L565.20 988.42M-842.05 330.86L1173.95 910.46M1734.40 -11.91L572.40 990.49M-846.20 334.44L1169.80 914.04M1741.60 -9.84L579.60 992.56M-850.35 338.02L1165.65 917.62M1748.80 -7.77L586.80 994.63M-854.50 341.60L1161.50 921.20M1756.00 -5.70L594.00 996.70M-858.65 345.18L1157.35 924.78M1763.20 -3.63L601.20 998.77M-862.80 348.76L1153.20 928.36M1770.40 -1.56L608.40 1000.84M-866.95 352.34L1149.05 931.94M-871.10 355.92L1144.90 935.52M-875.25 359.50L1140.75 939.10M-879.40 363.08L1136.60 942.68" stroke="#F3F3F6" stroke-width="1" fill="none"/>
<path d="M1357.00 -406.80L-303.00 1025.20" stroke="#FCECEC" stroke-width="1"/>
<path d="M-913.00 -104.80L1967.00 723.20" stroke="#EEF4EE" stroke-width="1"/>
<path d="M431.35 143.28L863.35 267.48M442.70 141.77L193.70 356.57M427.20 146.86L859.20 271.06M449.90 143.84L200.90 358.64M423.05 150.44L855.05 274.64M457.10 145.91L208.10 360.71M418.90 154.02L850.90 278.22M464.30 147.98L215.30 362.78M414.75 157.60L846.75 281.80M471.50 150.05L222.50 364.85M410.60 161.18L842.60 285.38M478.70 152.12L229.70 366.92M406.45 164.76L838.45 288.96M485.90 154.19L236.90 368.99M402.30 168.34L834.30 292.54M493.10 156.26L244.10 371.06M398.15 171.92L830.15 296.12M500.30 158.33L251.30 373.13M389.85 179.08L821.85 303.28M514.70 162.47L265.70 377.27M385.70 182.66L817.70 306.86M521.90 164.54L272.90 379.34M381.55 186.24L813.55 310.44M529.10 166.61L280.10 381.41M377.40 189.82L809.40 314.02M536.30 168.68L287.30 383.48M373.25 193.40L805.25 317.60M543.50 170.75L294.50 385.55M369.10 196.98L801.10 321.18M550.70 172.82L301.70 387.62M364.95 200.56L796.95 324.76M557.90 174.89L308.90 389.69M360.80 204.14L792.80 328.34M565.10 176.96L316.10 391.76M356.65 207.72L788.65 331.92M572.30 179.03L323.30 393.83M348.35 214.88L780.35 339.08M586.70 183.17L337.70 397.97M344.20 218.46L776.20 342.66M593.90 185.24L344.90 400.04M340.05 222.04L772.05 346.24M601.10 187.31L352.10 402.11M335.90 225.62L767.90 349.82M608.30 189.38L359.30 404.18M331.75 229.20L763.75 353.40M615.50 191.45L366.50 406.25M327.60 232.78L759.60 356.98M622.70 193.52L373.70 408.32M323.45 236.36L755.45 360.56M629.90 195.59L380.90 410.39M319.30 239.94L751.30 364.14M637.10 197.66L388.10 412.46M315.15 243.52L747.15 367.72M644.30 199.73L395.30 414.53M306.85 250.68L738.85 374.88M658.70 203.87L409.70 418.67M302.70 254.26L734.70 378.46M665.90 205.94L416.90 420.74M298.55 257.84L730.55 382.04M673.10 208.01L424.10 422.81M294.40 261.42L726.40 385.62M680.30 210.08L431.30 424.88M290.25 265.00L722.25 389.20M687.50 212.15L438.50 426.95M286.10 268.58L718.10 392.78M694.70 214.22L445.70 429.02M281.95 272.16L713.95 396.36M701.90 216.29L452.90 431.09M277.80 275.74L709.80 399.94M709.10 218.36L460.10 433.16M273.65 279.32L705.65 403.52M716.30 220.43L467.30 435.23M265.35 286.48L697.35 410.68M730.70 224.57L481.70 439.37M261.20 290.06L693.20 414.26M737.90 226.64L488.90 441.44M257.05 293.64L689.05 417.84M745.10 228.71L496.10 443.51M252.90 297.22L684.90 421.42M752.30 230.78L503.30 445.58M248.75 300.80L680.75 425.00M759.50 232.85L510.50 447.65M244.60 304.38L676.60 428.58M766.70 234.92L517.70 449.72M240.45 307.96L672.45 432.16M773.90 236.99L524.90 451.79M236.30 311.54L668.30 435.74M781.10 239.06L532.10 453.86M232.15 315.12L664.15 439.32M788.30 241.13L539.30 455.93M223.85 322.28L655.85 446.48M802.70 245.27L553.70 460.07M219.70 325.86L651.70 450.06M809.90 247.34L560.90 462.14M215.55 329.44L647.55 453.64M817.10 249.41L568.10 464.21M211.40 333.02L643.40 457.22M824.30 251.48L575.30 466.28M207.25 336.60L639.25 460.80M831.50 253.55L582.50 468.35M203.10 340.18L635.10 464.38M838.70 255.62L589.70 470.42M198.95 343.76L630.95 467.96M845.90 257.69L596.90 472.49M194.80 347.34L626.80 471.54M853.10 259.76L604.10 474.56M190.65 350.92L622.65 475.12M860.30 261.83L611.30 476.63" stroke="#5A5AB0" stroke-opacity="0.24" stroke-width="1" fill="none"/>
<path d="M394.00 175.50L826.00 299.70M507.50 160.40L258.50 375.20M352.50 211.30L784.50 335.50M579.50 181.10L330.50 395.90M311.00 247.10L743.00 371.30M651.50 201.80L402.50 416.60M269.50 282.90L701.50 407.10M723.50 222.50L474.50 437.30M228.00 318.70L660.00 442.90M795.50 243.20L546.50 458.00" stroke="#4A4AA0" stroke-opacity="0.40" stroke-width="1" fill="none"/>
<path d="M651.50 201.80L402.50 416.60" stroke="#E8898F" stroke-width="1"/>
<path d="M311.00 247.10L743.00 371.30" stroke="#94C294" stroke-width="1"/>
</svg></div>


<!-- viewport overlays (page coords) -->
<div class="t" style="left:52px;top:199.5px;font-size:16.6px;color:#707070">Snapping to Grid</div>
<div class="snap" style="top:226px"></div>
<div class="snap" style="top:266px"></div>
<div class="snap" style="top:306px"></div>
<svg class="a" style="left:0;top:0" width="1097" height="883" viewBox="0 0 1097 883">
 <!-- snap icon 1: cursor + line -->
 <path d="M57.5 231.5 L57.5 244 L60.5 241.5 L62.5 246 L64.5 245 L62.5 240.5 L66.5 240 Z" fill="#D0D0D0" stroke="#B8B8B8" stroke-width="0.6"/>
 <path d="M58.5 229.5 L74.5 237" stroke="#C8D8C8" stroke-width="0.8"/>
 <path d="M81 235.5 L66.5 254" stroke="#B8B8B8" stroke-width="0.9"/>
 <circle cx="81" cy="235.5" r="0.9" fill="#909090"/><circle cx="66.5" cy="254" r="0.9" fill="#909090"/>
 <!-- snap icon 2 -->
 <path d="M57.5 272.5 L57.5 292 L79.5 292 M57.5 272.5 L79.5 272.5 L79.5 292" fill="none" stroke="#D0D0D0" stroke-width="0.7" stroke-dasharray="1.5 1.5"/>
 <path d="M62.5 287 L79.5 271" stroke="#B0B0B0" stroke-width="0.9"/>
 <circle cx="62.5" cy="287.5" r="2.6" fill="none" stroke="#E0E080" stroke-width="1.4"/>
 <!-- snap icon 3 -->
 <circle cx="67.5" cy="322" r="9" fill="none" stroke="#B8C4E0" stroke-width="1" stroke-dasharray="3 4"/>
 <path d="M64 325.5 L74.5 319" stroke="#B0B0B0" stroke-width="0.9"/>
 <circle cx="63.5" cy="325.5" r="2.2" fill="none" stroke="#E8E8A0" stroke-width="1.2"/>
 <!-- ANSYS logo -->
 <text x="1065.3" y="244.8" font-family="Liberation Sans" font-weight="bold" font-size="31" fill="#4A4A4A" stroke="#4A4A4A" stroke-width="0.9" text-anchor="end" transform="translate(1065.3 0) scale(0.772 1) translate(-1065.3 0)">ANSYS</text>
 <text x="1063.5" y="262.7" font-family="Liberation Sans" font-size="16.3" fill="#4A4A4A" text-anchor="end">2019 <tspan font-weight="bold">R1</tspan></text>
 <!-- center triad -->
 <path d="M566.3 498 L566.3 467" stroke="#6CB86C" stroke-width="4"/>
 <path d="M561.6 468.5 L566.3 445.5 L570.9 468.5 Z" fill="#108A10"/>
 <path d="M566.3 498.6 L597 507.3" stroke="#EE6060" stroke-width="4"/>
 <path d="M595.5 503 L619 513.4 L596.2 511.5 Z" fill="#F00000"/>
 <path d="M566.3 498.6 L549 512.5" stroke="#8A9CE8" stroke-width="3.2"/>
 <path d="M544.5 509 Q546 506 549 508 L552 511.5 Q553 514.5 550.5 516 L535.5 524.8 Z" fill="#4A6CF0"/>
 <circle cx="566.3" cy="498.6" r="2.6" fill="#808080"/>
 <text x="566" y="437.8" font-family="Liberation Sans" font-weight="bold" font-size="12.3" fill="#5AA85A" text-anchor="middle">Y</text>
 <text x="631" y="521.8" font-family="Liberation Sans" font-weight="bold" font-size="12.3" fill="#F07070" text-anchor="middle">X</text>
 <text x="528.8" y="535.9" font-family="Liberation Sans" font-weight="bold" font-size="12.3" fill="#5A5AE8" text-anchor="middle">Z</text>
 <!-- corner triad -->
 <path d="M110.8 716.5 L110.8 708" stroke="#108A10" stroke-width="3"/>
 <path d="M106.4 710.5 L110.8 695.5 L115.4 710.5 Z" fill="#108A10"/>
 <text x="110.8" y="689.5" font-family="Liberation Sans" font-weight="bold" font-size="13" fill="#0A6A0A" text-anchor="middle">Y</text>
 <path d="M93.6 727.3 L108 718.6 L127.3 723.6 L113.6 732.3 Z" fill="#E6EEF8" stroke="#A8B4D0" stroke-width="0.8"/>
 <path d="M93.6 727.3 L113.6 732.3 L115.5 755.4 L97.4 749.8 Z" fill="#DDE8F8" stroke="#A8B4D0" stroke-width="0.8"/>
 <path d="M113.6 732.3 L127.3 723.6 L127.3 744.8 L115.5 755.4 Z" fill="#C8D2E8" stroke="#A8B4D0" stroke-width="0.8"/>
 <ellipse cx="110.8" cy="724.5" rx="5" ry="3.6" fill="#109010"/>
 <ellipse cx="104.2" cy="741.6" rx="5" ry="5.2" fill="#0000F0"/>
 <ellipse cx="123.3" cy="739.5" rx="3.8" ry="5" fill="#F00000"/>
 <path d="M130.4 741.6 L141 744.5" stroke="#F00000" stroke-width="2.4"/>
 <path d="M137.5 739 L151 747.3 L135.5 747.8 Z" fill="#F00000"/>
 <text x="160.6" y="755.4" font-family="Liberation Sans" font-weight="bold" font-size="13.5" fill="#F00000" text-anchor="middle">X</text>
 <path d="M98.6 746.6 L95 749.8" stroke="#A0A8F0" stroke-width="2"/>
 <path d="M93 745 L85 758.5 L99 751.5 Z" fill="#A8ACF8"/>
 <text x="77.7" y="769.7" font-family="Liberation Sans" font-weight="bold" font-size="13.5" fill="#0000F0" text-anchor="middle">Z</text>
</svg>
<!-- bottom viewport toolbar -->
<div class="vbtn" style="left:480px"></div>
<div class="vbtn" style="left:525px"></div>
<div class="vbtn" style="left:570px"></div>
<div class="vbtn" style="left:615px"></div>
<svg class="a" style="left:470px;top:760px" width="200" height="50" viewBox="470 760 200 50">
 <path d="M493 776 L500 773 L508.5 776 L508.5 791 L501.5 794 L493 791 Z" fill="#3AA83A" stroke="#1A6A1A" stroke-width="1"/>
 <path d="M493.5 776.5 L501.5 779 L501.5 793.5 L493.5 790.8 Z" fill="#B0F8A8"/>
 <path d="M493 776 L501.5 779 L508.5 776 M501.5 779 V794" fill="none" stroke="#1A6A1A" stroke-width="1"/>
 <rect x="536" y="775" width="16" height="15" fill="#404070"/>
 <path d="M536 779 h16 M536 783 h16 M536 787 h16 M540 775 v15 M544 775 v15 M548 775 v15" stroke="#C0C0D8" stroke-width="0.9"/>
 <path d="M537.5 792.5 L539.5 787 L552 776 L555 779 L543 790 Z" fill="#E6D830" stroke="#303010" stroke-width="0.9"/>
 <path d="M552 776 L555 779 L556.5 777.5 L553.5 774.5 Z" fill="#E06060"/>
 <path d="M580.5 793.5 L587 784.5 L601 784.5 L594.5 793.5 Z" fill="none" stroke="#505050" stroke-width="1.4"/>
 <path d="M591.5 788 V778" stroke="#2080C0" stroke-width="2.2"/>
 <path d="M587.5 780 L591.5 771 L595.5 780 Z" fill="#A8D4F0" stroke="#4090C8" stroke-width="0.8"/>
 <path d="M590 771 h4" stroke="#707070" stroke-width="0.6"/>
 <path d="M625 779 Q635 770 645 779 Q635 787 625 779 Z" fill="#fff" stroke="#202020" stroke-width="2"/>
 <circle cx="635" cy="778.5" r="3.2" fill="#4A90B8" stroke="#202020" stroke-width="0.8"/>
 <rect x="626.5" y="782" width="17" height="10.5" fill="#3A3A78"/>
 <path d="M626.5 785.5 h17 M626.5 789 h17 M630.5 782 v10.5 M634.5 782 v10.5 M638.5 782 v10.5" stroke="#E0E0F0" stroke-width="1"/>
</svg>

<!-- doc tab bar -->
<div class="a" style="left:35px;top:812px;width:1062px;height:32px;background:#F4F4FA;border-left:1px solid #555;border-top:1px solid #777"></div>


<!-- doc tab -->
<div class="a" style="left:39px;top:812px;width:114px;height:27px;background:#F4F4FA;border-left:1px solid #2D5C88;border-right:1px solid #2D5C88;border-bottom:2px solid #2D5C88"></div>
<svg class="a" style="left:40px;top:812px" width="110" height="28" viewBox="40 812 110 28">
 <defs><linearGradient id="ylw" x1="0" y1="0" x2="1" y2="1"><stop offset="0" stop-color="#FFF060"/><stop offset="1" stop-color="#F8B800"/></linearGradient></defs>
 <rect x="44" y="815.2" width="19.4" height="19.2" rx="3.5" fill="url(#ylw)"/>
 <path d="M45.5 833.5 L51.5 816.5 L56 816.5 L62 833.5 L58 833.5 L53.8 821 L49.5 833.5 Z" fill="#1A1A1A"/>
</svg>
<div class="t" style="left:68.3px;top:818px;font-size:14.2px;font-weight:bold;color:#2D5C88;letter-spacing:0.3px">Design1*</div>
<svg class="a" style="left:1040px;top:815px" width="57" height="20" viewBox="1040 815 57 20">
 <path d="M1052.5 820.5 L1046 825.5 L1052.5 830.5 Z" fill="none" stroke="#303030" stroke-width="1"/>
 <path d="M1064 820.5 L1070.5 825.5 L1064 830.5 Z" fill="none" stroke="#303030" stroke-width="1"/>
 <path d="M1081 820.5 L1091 830.5 M1091 820.5 L1081 830.5" stroke="#303030" stroke-width="1.3"/>
</svg>
<svg class="a" style="left:134px;top:818px" width="16" height="14" viewBox="134 818 16 14">
 <path d="M137 821 L145 828.6 M145 821 L137 828.6" stroke="#7A7A7A" stroke-width="2.2"/>
</svg>

<!-- status bar -->
<div id="status" class="a"></div>
<div class="t" style="left:13px;top:857px;font-size:13.7px;color:#fff">Snapping to Grid</div>


<div class="ssep" style="left:339px"></div>
<div class="ssep" style="left:499px"></div>
<div class="ssep" style="left:543px"></div>
<div class="ssep" style="left:630px"></div>
<div class="ssep" style="left:900px"></div>
<div class="t" style="left:346px;top:857px;font-size:13.9px;color:#fff">x=-57.0000&nbsp; y=-50.0000</div>
<svg class="a" style="left:500px;top:845px" width="597" height="38" viewBox="500 845 597 38">
 <path d="M506 871 L514 857 L522 871 Z" fill="#A8B4C4" stroke="#8A9AB0" stroke-width="0.8" stroke-linejoin="round"/>
 <path d="M529 867.5 L533.5 862.5 L538 867.5 Z" fill="#fff"/>
 <!-- nav up/down -->
 <path d="M764.7 861 L771 853 L777.7 861 Z" fill="#7E92A8"/>
 <path d="M764.7 866.5 L771 874.5 L777.7 866.5 Z" fill="#7E92A8"/>
 <!-- select + rotate -->
 <path d="M787.5 855.5 L787.5 870.5 L791 867.5 L794 873 L796.5 871.8 L793.5 866.5 L798 866 Z" fill="#fff" stroke="#222" stroke-width="1.1" stroke-linejoin="round"/>
 <path d="M799 859 Q806 857 806 864 Q806 869 801 870" fill="none" stroke="#70BFF8" stroke-width="2"/>
 <path d="M796 855 L801 861 L803 855 Z" fill="#70BFF8"/>
 <!-- select -->
 <path d="M820.5 855.5 L820.5 870.5 L824 867.5 L827 873 L829.5 871.8 L826.5 866.5 L831 866 Z" fill="#fff" stroke="#222" stroke-width="1.1" stroke-linejoin="round"/>
 <path d="M842 867.5 L846.5 862.5 L851 867.5 Z" fill="#fff"/>
 <!-- dashed rect -->
 <rect x="862" y="857.5" width="18" height="14" fill="none" stroke="#70BFF8" stroke-width="2" stroke-dasharray="3.5 2.5"/>
 <path d="M886.5 867.5 L891 862.5 L895.5 867.5 Z" fill="#fff"/>
 <!-- rotate -->
 <path d="M910 864 Q915.8 860 921.5 864 M915.8 858.5 Q912.5 864 915.8 869.5" fill="none" stroke="#70BFF8" stroke-width="2.6"/>
 <path d="M906 863.5 L911.5 859.5 L911 867.5 Z M925.8 864.5 L920.5 860.8 L920.8 868.5 Z M915.8 854.6 L912 859.5 L919.5 859.8 Z M915.8 873.5 L912 868.5 L919.5 868.8 Z" fill="#70BFF8"/>
 <path d="M931.4 867.5 L935.7 862.5 L940 867.5 Z" fill="#fff"/>
 <!-- pan -->
 <path d="M950.5 864 h19 M960 854.5 v19" stroke="#70BFF8" stroke-width="2.2"/>
 <path d="M949.5 864 L954 860 L954 868 Z M970.2 864 L965.7 860 L965.7 868 Z M960 853.5 L956 858 L964 858 Z M960 874.5 L956 870 L964 870 Z" fill="#70BFF8"/>
 <!-- zoom -->
 <circle cx="987" cy="862.5" r="6.2" fill="#fff" stroke="#70BFF8" stroke-width="2.6"/>
 <path d="M991.5 867.5 L997.5 873" stroke="#70BFF8" stroke-width="3.4" stroke-linecap="round"/>
 <path d="M1004 867.5 L1008.4 862.5 L1012.8 867.5 Z" fill="#fff"/>
 <!-- back -->
 <path d="M1042.5 858 L1030 866" stroke="#70BFF8" stroke-width="3.6"/>
 <path d="M1023 872 L1026.5 861.5 L1034 870 Z" fill="#70BFF8"/>
 <!-- forward -->
 <path d="M1054 870 L1066.5 862" stroke="#7E8E9E" stroke-width="3.6"/>
 <path d="M1073.3 856 L1070 866.5 L1062.5 858 Z" fill="#7E8E9E"/>
</svg>

</body></html>
